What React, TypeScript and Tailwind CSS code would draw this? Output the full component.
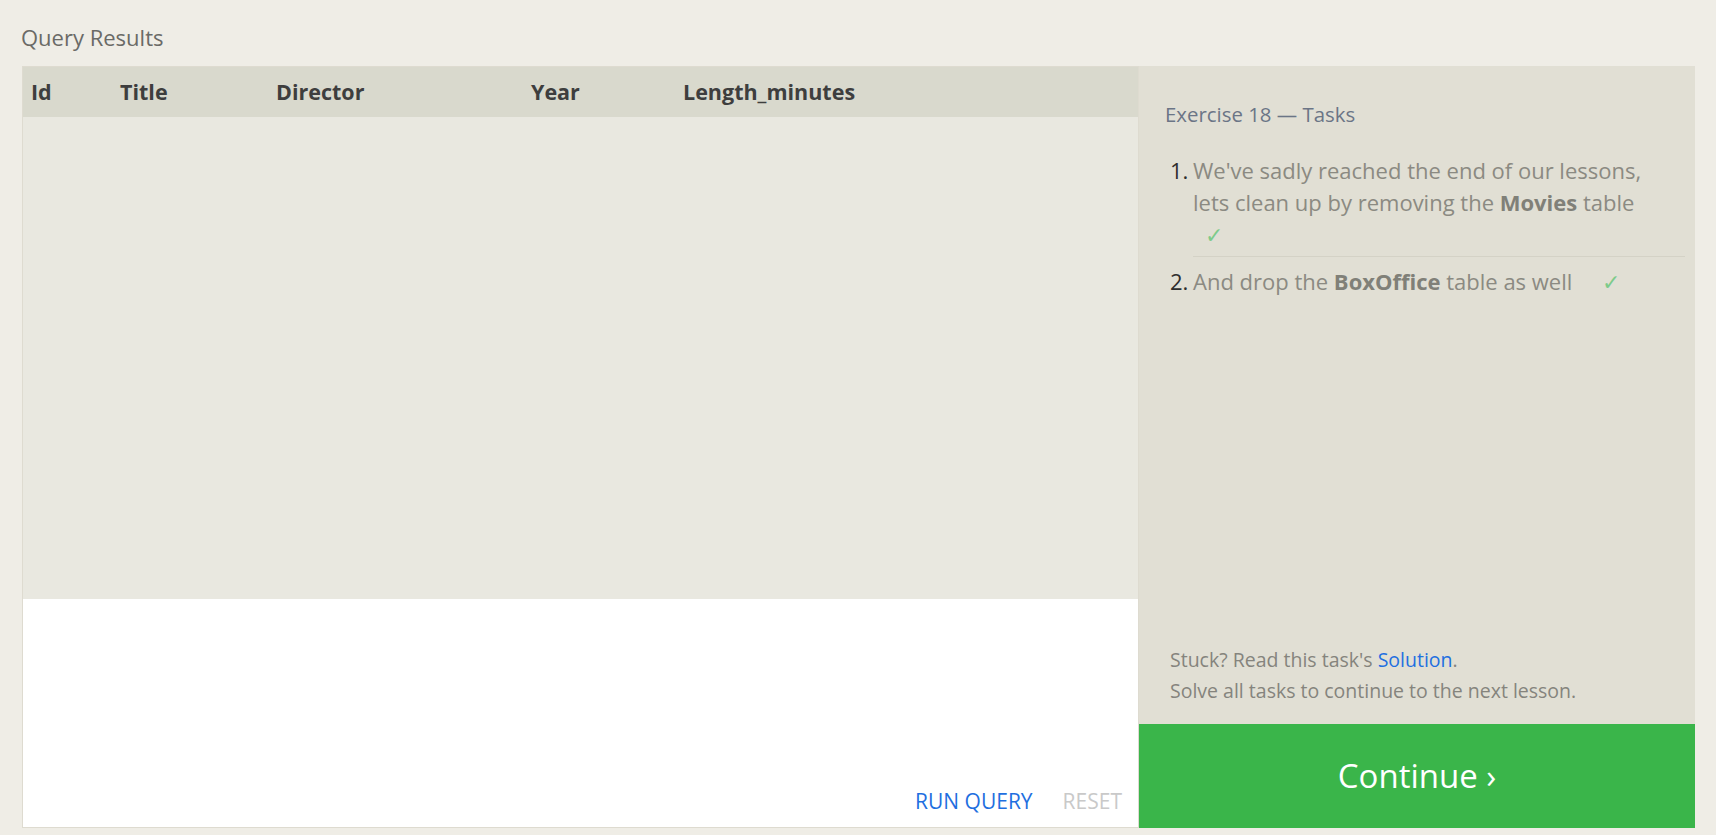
import React from 'react';

const columns = [
  { label: 'Id', width: 'w-[89px]' },
  { label: 'Title', width: 'w-[156px]' },
  { label: 'Director', width: 'w-[255px]' },
  { label: 'Year', width: 'w-[152px]' },
  { label: 'Length_minutes', width: 'flex-1' },
];

function Check({ className = '' }: { className?: string }) {
  return <span className={`text-[#7dcb8a] ${className}`}>✓</span>;
}

export default function App() {
  return (
    <div className="h-[835px] w-full overflow-hidden bg-[#efede6] font-['Open_Sans',sans-serif]">
      <div className="flex h-[66px] items-center pl-[21px] pt-[9px] text-[22px] text-[#6a6a66]">Query Results</div>

      <div className="flex h-[762px] pl-[22px] pr-[21px]">
        {/* Results table + editor */}
        <div className="flex w-[1117px] flex-col border border-[#dedbd0] bg-white">
          <div className="flex flex-1 flex-col bg-[#e9e8e0]">
            <div className="flex h-[50px] items-center bg-[#d9d9cd] pl-[8px] text-[21.5px] font-bold text-[#3e3e3e]">
              {columns.map((c) => (
                <div key={c.label} className={c.width}>{c.label}</div>
              ))}
            </div>
          </div>
          <div className="flex h-[228px] items-end justify-end gap-[30px] pb-[10px] pr-[16px] text-[21px]">
            <button className="text-[#1f6fe0]">RUN QUERY</button>
            <button className="text-[#c9c9c9]">RESET</button>
          </div>
        </div>

        {/* Tasks panel */}
        <div className="flex w-[556px] flex-col bg-[#e1dfd4]">
          <div className="flex flex-1 flex-col pl-[26px] pr-[10px] pt-[33px]">
            <h2 className="text-[20.4px] text-[#6b7586]">Exercise 18 — Tasks</h2>
            <ol className="mt-[24px] text-[22px] leading-[32px] text-[#8b8a82]">
              <li className="flex">
                <span className="w-[28px] shrink-0 pl-[5px] text-[#2e2e2e]">1.</span>
                <div className="flex-1 border-b border-[#d4d2c6] pb-[6px]">
                  <p className="pr-[30px]">
                    We've sadly reached the end of our lessons, lets clean up by removing the <b className="text-[#808078]">Movies</b> table
                  </p>
                  <Check className="ml-[12px] block" />
                </div>
              </li>
              <li className="flex pt-[8px]">
                <span className="w-[28px] shrink-0 pl-[5px] text-[#2e2e2e]">2.</span>
                <div className="flex-1">
                  And drop the <b className="text-[#808078]">BoxOffice</b> table as well <Check className="ml-[24px]" />
                </div>
              </li>
            </ol>
            <div className="mt-auto pb-[18px] pl-[5px] text-[19.5px] leading-[31px] text-[#85847d]">
              <p>
                Stuck? Read this task's <a className="text-[#1f6fe0]">Solution</a>.
              </p>
              <p>Solve all tasks to continue to the next lesson.</p>
            </div>
          </div>
          <button className="flex h-[104px] items-center justify-center bg-[#3ab54a] text-[33px] text-white">
            Continue ›
          </button>
        </div>
      </div>
    </div>
  );
}
